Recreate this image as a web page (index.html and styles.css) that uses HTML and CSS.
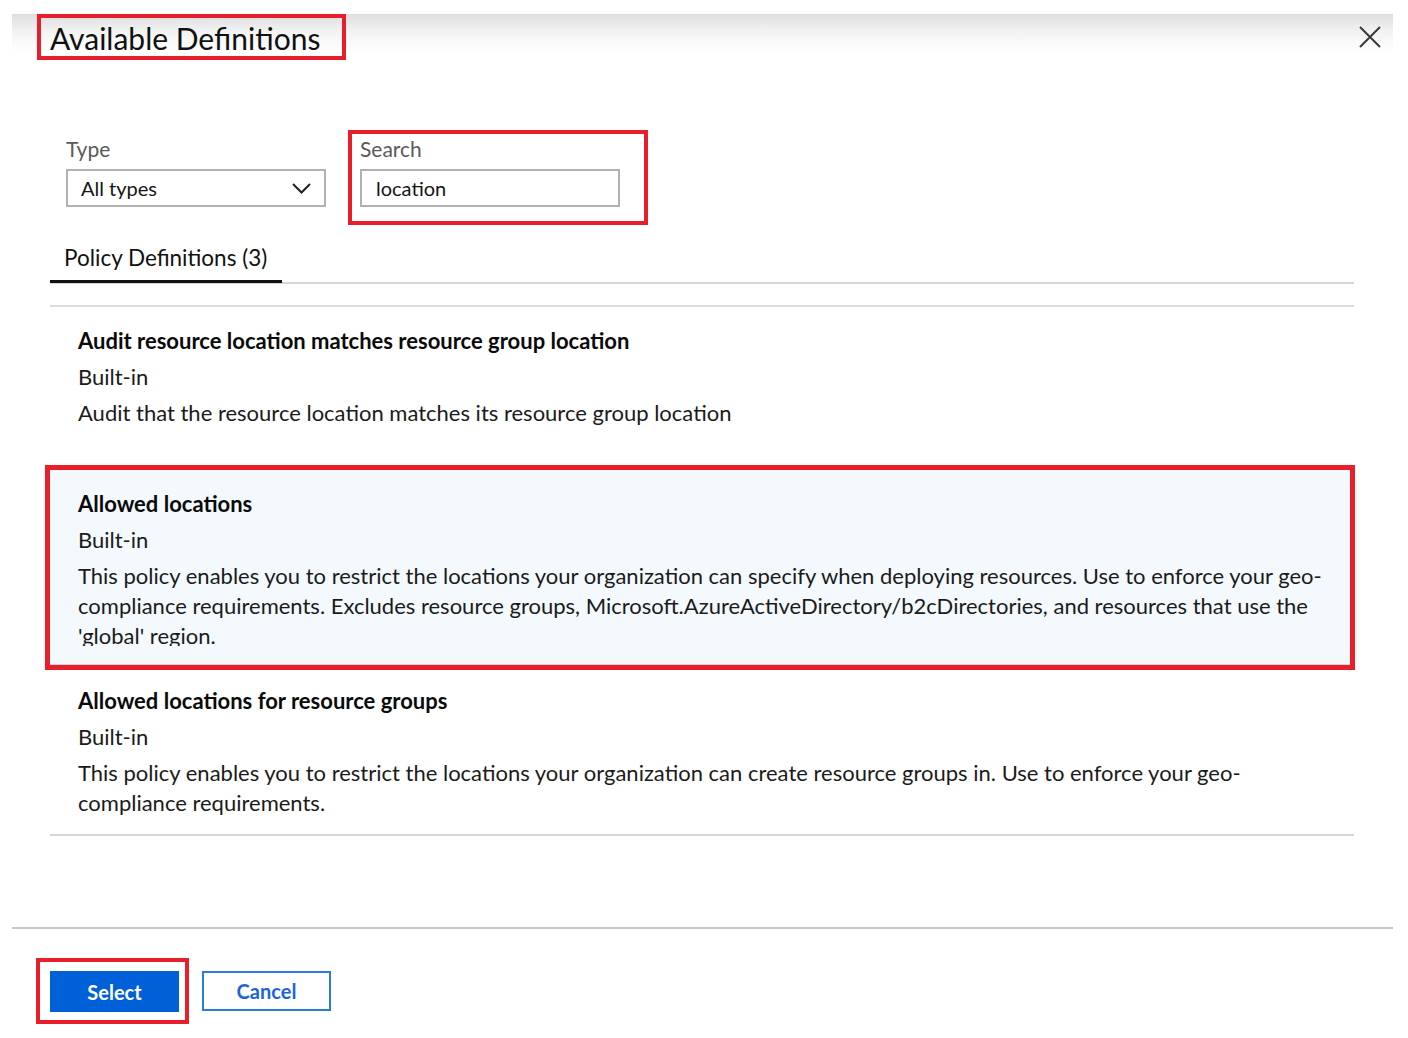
FILE: index.html
```html
<!DOCTYPE html>
<html lang="en">
<head>
<meta charset="utf-8">
<title>Available Definitions</title>
<link rel="stylesheet" href="styles.css">
</head>
<body>
<div class="panel">
  <div class="header">
    <div class="title-box"><h1 class="title">Available Definitions</h1></div>
    <button class="close" aria-label="Close">
      <svg width="22" height="22" viewBox="0 0 22 22"><path d="M1 1 L21 21 M21 1 L1 21" stroke="#3a3a3a" stroke-width="2" fill="none"/></svg>
    </button>
  </div>

  <div class="filters">
    <div class="field field-type">
      <label class="label">Type</label>
      <div class="select">
        <span>All types</span>
        <svg width="19" height="11" viewBox="0 0 19 11"><path d="M1 1 L9.5 9.5 L18 1" stroke="#222" stroke-width="2" fill="none"/></svg>
      </div>
    </div>
    <div class="field field-search">
      <label class="label">Search</label>
      <div class="input">location</div>
    </div>
  </div>

  <div class="tabs">
    <div class="tab">Policy Definitions (3)</div>
  </div>

  <div class="list">
    <div class="item item-first">
      <div class="item-title">Audit resource location matches resource group location</div>
      <div class="item-type">Built-in</div>
      <div class="item-desc">Audit that the resource location matches its resource group location</div>
    </div>
    <div class="item item-selected">
      <div class="item-title">Allowed locations</div>
      <div class="item-type">Built-in</div>
      <div class="item-desc">This policy enables you to restrict the locations your organization can specify when deploying resources. Use to enforce your geo-compliance requirements. Excludes resource groups, Microsoft.AzureActiveDirectory/b2cDirectories, and resources that use the 'global' region.</div>
    </div>
    <div class="item item-last">
      <div class="item-title">Allowed locations for resource groups</div>
      <div class="item-type">Built-in</div>
      <div class="item-desc">This policy enables you to restrict the locations your organization can create resource groups in. Use to enforce your geo-compliance requirements.</div>
    </div>
  </div>

  <div class="footer">
    <div class="btn-mark"><button class="btn btn-primary">Select</button></div>
    <button class="btn btn-secondary">Cancel</button>
  </div>
</div>
</body>
</html>
```

FILE: styles.css
```css
* { box-sizing: border-box; }

html, body {
  margin: 0;
  padding: 0;
  background: #ffffff;
}

body {
  font-family: "Lato", "Open Sans", sans-serif;
  color: #1b1b1b;
  height: 1038px;
  overflow: hidden;
}

.panel {
  margin: 14px 15px 0 12px;
  height: 1024px;
  display: flex;
  flex-direction: column;
}

.header {
  height: 46px;
  display: flex;
  align-items: center;
  justify-content: space-between;
  background: linear-gradient(to bottom, #dedede 0px, #f3f3f3 18px, #ffffff 38px);
}

.title-box {
  margin-left: 25px;
  height: 46px;
  border: 4px solid #e81f2a;
  padding: 0 22px 0 9px;
  display: flex;
  align-items: center;
}

.title {
  margin: 0;
  font-size: 30px;
  font-weight: 400;
  color: #111;
  line-height: 38px;
  padding-top: 2px;
}

.close {
  margin-right: 12px;
  background: none;
  border: 0;
  padding: 0;
  width: 22px;
  height: 22px;
  display: flex;
}

.filters {
  margin-top: 70px;
  padding-left: 54px;
  display: flex;
  align-items: flex-start;
  gap: 22px;
}

.field {
  display: flex;
  flex-direction: column;
}

.field-type {
  padding-top: 4px;
}

.field-search {
  border: 4px solid #e81f2a;
  padding: 0 24px 14px 8px;
}

.label {
  font-size: 21px;
  line-height: 28px;
  color: #5a5a5a;
  margin-bottom: 6px;
  padding-top: 1px;
}

.select, .input {
  height: 38px;
  border: 2px solid #b0b0b0;
  font-size: 20px;
  color: #151515;
  display: flex;
  align-items: center;
}

.select {
  width: 260px;
  padding: 0 13px 0 13px;
  justify-content: space-between;
}

.input {
  width: 260px;
  padding: 0 14px;
}

.tabs {
  margin: 19px 39px 0 38px;
  border-bottom: 2px solid #d6d6d6;
  display: flex;
}

.tab {
  font-size: 22.5px;
  line-height: 28px;
  padding: 0 15px 8px 14px;
  border-bottom: 3px solid #111;
  margin-bottom: -1px;
  color: #111;
}

.list {
  margin: 21px 39px 0 38px;
  border-top: 2px solid #dcdcdc;
}

.item {
  padding: 19px 20px 12px 28px;
}

.item-title {
  font-size: 22px;
  font-weight: 700;
  line-height: 30px;
  color: #0a0a0a;
}

.item-type, .item-desc {
  font-size: 22px;
  line-height: 30px;
  margin-top: 6px;
  color: #1b1b1b;
}

.item-desc {
  min-height: 60px;
  max-height: 85px;
  overflow: hidden;
}

.item-selected {
  background: #f3f9fd;
  border-bottom: 1px solid #d2d6da;
  outline: 5px solid #e81f2a;
  margin-right: 4px;
  padding-bottom: 18px;
  padding-right: 16px;
}

.item-last {
  padding-top: 21px;
  padding-bottom: 16px;
  border-bottom: 2px solid #d6d6d6;
}

.footer {
  margin-top: auto;
  height: 111px;
  border-top: 2px solid #c8c8c8;
  display: flex;
  align-items: flex-start;
  padding: 29px 0 0 24px;
  gap: 13px;
}

.btn-mark {
  border: 4px solid #e81f2a;
  padding: 9px 6px 8px 10px;
}

.btn {
  font-family: "Lato", "Open Sans", sans-serif;
  font-size: 20px;
  font-weight: 700;
  height: 41px;
  width: 129px;
  cursor: pointer;
}

.btn-primary {
  background: #0060d8;
  color: #ffffff;
  border: 0;
}

.btn-secondary {
  margin-top: 13px;
  height: 40px;
  background: #ffffff;
  color: #1c64d8;
  border: 2px solid #2a7ae0;
}
```
